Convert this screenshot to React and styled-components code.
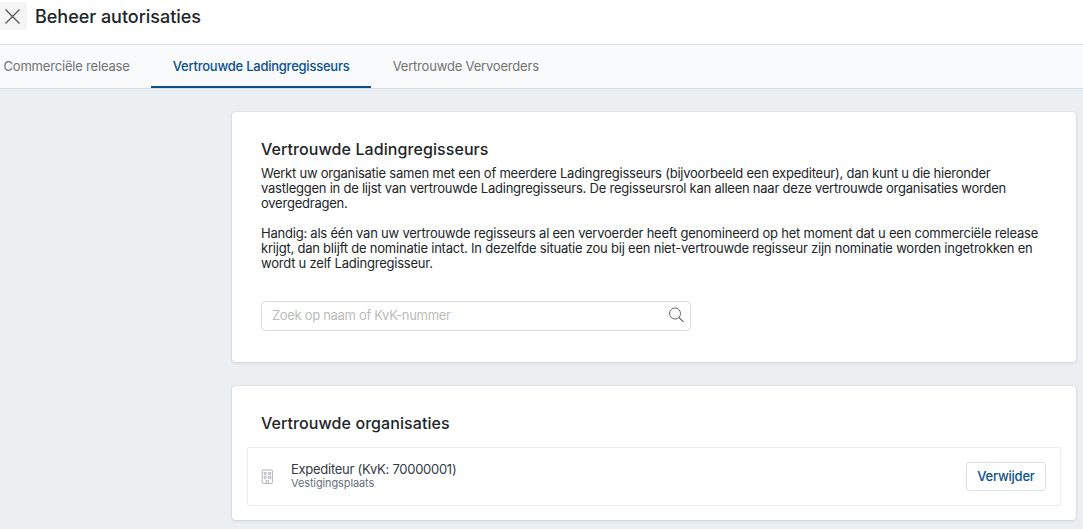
import React, { useState } from 'react';
import styled, { createGlobalStyle } from 'styled-components';

const GlobalStyle = createGlobalStyle`
  * {
    box-sizing: border-box;
  }

  body {
    margin: 0;
    background: #ebeff2;
    color: #212529;
    font-family: Inter, 'Liberation Sans', sans-serif;
    font-size: 13px;
    line-height: 15px;
    overflow: hidden;
  }
`;

const Page = styled.div`
  height: 100vh;
  overflow: hidden;
`;

const Header = styled.header`
  display: flex;
  align-items: flex-start;
  height: 45px;
  padding-top: 2px;
  background: #fff;
  border-bottom: 1px solid #dcdfe5;
`;

const CloseButton = styled.button`
  display: flex;
  align-items: center;
  width: 27px;
  height: 28px;
  padding: 0 0 0 4px;
  border: 0;
  border-radius: 0 3px 3px 0;
  background: #f5f5f5;
  color: #555;
`;

const PageTitle = styled.h1`
  margin: 0 0 0 8px;
  font-size: 18px;
  font-weight: 500;
  line-height: 30px;
  letter-spacing: -0.03px;
`;

const TabBar = styled.nav`
  display: flex;
  height: 44px;
  background: #f9fafc;
  border-bottom: 1px solid #d5dde4;
`;

const Tab = styled.button`
  height: 43px;
  padding: 0 21.6px 0 ${({ $first }) => ($first ? '3.5px' : '21.6px')};
  border: 0;
  border-bottom: 2px solid ${({ $active }) => ($active ? '#0c5088' : 'transparent')};
  background: none;
  color: ${({ $active }) => ($active ? '#08508f' : '#727272')};
  font: ${({ $active }) => ($active ? 500 : 400)} 13px/40px Inter, 'Liberation Sans', sans-serif;
  letter-spacing: ${({ $active }) => ($active ? '-0.24px' : '-0.19px')};
  white-space: nowrap;
`;

const Content = styled.main`
  display: flex;
  flex-direction: column;
  gap: 24px;
  padding: 23px 7px 0 232px;
`;

const Card = styled.section`
  height: ${({ $height }) => $height}px;
  padding: 26px 15px 0;
  background: #fff;
  border-radius: 3px;
  box-shadow: 0 0 1px rgba(60, 80, 95, 0.35), 0 1px 3px rgba(60, 80, 95, 0.14);
`;

const CardBody = styled.div`
  padding: 0 14px;
`;

const CardTitle = styled.h2`
  margin: 0;
  font-size: 16px;
  font-weight: 500;
  line-height: 22px;
  letter-spacing: 0.08px;
`;

const Paragraph = styled.p`
  margin: ${({ $spaced }) => ($spaced ? '15px' : '6px')} 0 0;
  letter-spacing: ${({ $spaced }) => ($spaced ? '-0.22px' : '-0.235px')};
  white-space: nowrap;
`;

const SearchBox = styled.label`
  display: flex;
  align-items: center;
  width: 430px;
  height: 30px;
  margin-top: 30px;
  padding: 0 6px 2px 10px;
  border: 1px solid #dcdcdc;
  border-radius: 4px;
  color: #666;
`;

const SearchInput = styled.input`
  flex: 1;
  min-width: 0;
  padding: 0;
  border: 0;
  outline: 0;
  background: none;
  font: 400 13px/18px Inter, 'Liberation Sans', sans-serif;
  letter-spacing: -0.32px;

  &::placeholder {
    color: #bbb;
    opacity: 1;
  }
`;

const OrganisationRow = styled.div`
  display: flex;
  align-items: center;
  height: 59px;
  margin-top: 13px;
  padding: 0 14px 0 13px;
  border: 1px solid #ebedef;
  border-radius: 2px;
  color: #b2b4b8;
`;

const OrganisationInfo = styled.div`
  flex: 1;
  margin-left: 18px;
  padding-bottom: 2px;
`;

const OrganisationName = styled.div`
  color: #343a46;
  line-height: 15px;
  letter-spacing: -0.27px;
`;

const OrganisationPlace = styled.div`
  color: #68707c;
  font-size: 11px;
  line-height: 13px;
  letter-spacing: -0.12px;
`;

const RemoveButton = styled.button`
  width: 80px;
  height: 29px;
  padding: 0 0 1px;
  border: 1px solid #dcdfe2;
  border-radius: 3px;
  background: #fff;
  color: #08508f;
  font: 500 13px/16px Inter, 'Liberation Sans', sans-serif;
  letter-spacing: -0.22px;
`;

const CloseIcon = () => (
  <svg width="17" height="17" viewBox="0 0 17 17" fill="none" stroke="currentColor" strokeWidth="1.3">
    <path d="M1.5 1.5 15.5 15.5M15.5 1.5 1.5 15.5" />
  </svg>
);

const SearchIcon = () => (
  <svg width="16" height="16" viewBox="0 0 16 16" fill="none" stroke="currentColor">
    <circle cx="7" cy="6.5" r="5.5" />
    <path d="m11 10.5 4.3 4.3" strokeWidth="1.1" />
  </svg>
);

const BuildingIcon = () => (
  <svg width="12" height="15" viewBox="0 0 12 15" fill="none" stroke="currentColor" strokeWidth="1">
    <rect x="1.2" y="1" width="10.2" height="13.4" rx="0.8" />
    <path d="M3.2 3.4h2v2h-2zM7.6 3.4h2v2h-2zM3.2 7.4h2v2h-2zM7.6 7.4h2v2h-2zM5.2 14.2v-2.8h2.4v2.8" />
  </svg>
);

const tabs = ['Commerciële release', 'Vertrouwde Ladingregisseurs', 'Vertrouwde Vervoerders'];

const organisations = [{ name: 'Expediteur', kvk: '70000001', place: 'Vestigingsplaats' }];

const App = () => {
  const [activeTab, setActiveTab] = useState(1);
  const [query, setQuery] = useState('');

  return (
    <Page>
      <GlobalStyle />
      <Header>
        <CloseButton aria-label="Sluiten">
          <CloseIcon />
        </CloseButton>
        <PageTitle>Beheer autorisaties</PageTitle>
      </Header>

      <TabBar>
        {tabs.map((tab, index) => (
          <Tab
            key={tab}
            $first={index === 0}
            $active={index === activeTab}
            onClick={() => setActiveTab(index)}
          >
            {tab}
          </Tab>
        ))}
      </TabBar>

      <Content>
        <Card $height={250}>
          <CardBody>
            <CardTitle>Vertrouwde Ladingregisseurs</CardTitle>
            <Paragraph>
              Werkt uw organisatie samen met een of meerdere Ladingregisseurs (bijvoorbeeld een expediteur), dan kunt u die hieronder
              <br />
              vastleggen in de lijst van vertrouwde Ladingregisseurs. De regisseursrol kan alleen naar deze vertrouwde organisaties worden
              <br />
              overgedragen.
            </Paragraph>
            <Paragraph $spaced>
              Handig: als één van uw vertrouwde regisseurs al een vervoerder heeft genomineerd op het moment dat u een commerciële release
              <br />
              krijgt, dan blijft de nominatie intact. In dezelfde situatie zou bij een niet-vertrouwde regisseur zijn nominatie worden ingetrokken en
              <br />
              wordt u zelf Ladingregisseur.
            </Paragraph>
            <SearchBox>
              <SearchInput
                placeholder="Zoek op naam of KvK-nummer"
                value={query}
                onChange={(e) => setQuery(e.target.value)}
              />
              <SearchIcon />
            </SearchBox>
          </CardBody>
        </Card>

        <Card $height={134}>
          <CardBody>
            <CardTitle>Vertrouwde organisaties</CardTitle>
          </CardBody>
          {organisations.map((organisation) => (
            <OrganisationRow key={organisation.kvk}>
              <BuildingIcon />
              <OrganisationInfo>
                <OrganisationName>
                  {organisation.name} (KvK: {organisation.kvk})
                </OrganisationName>
                <OrganisationPlace>{organisation.place}</OrganisationPlace>
              </OrganisationInfo>
              <RemoveButton>Verwijder</RemoveButton>
            </OrganisationRow>
          ))}
        </Card>
      </Content>
    </Page>
  );
};

export default App;
